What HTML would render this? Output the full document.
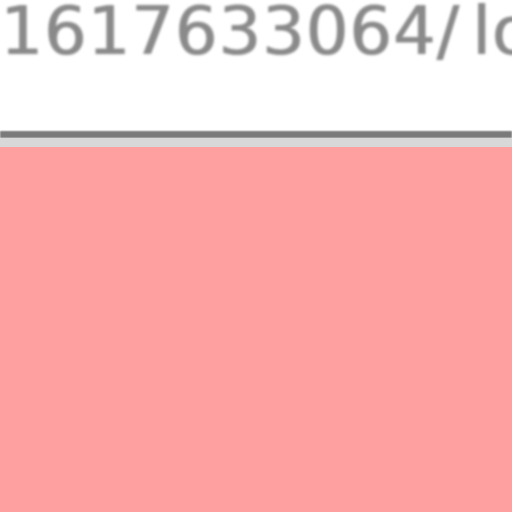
<!DOCTYPE html>
<html><head><style>
html,body{margin:0;padding:0;width:512px;height:512px;overflow:hidden;background:#fff;position:relative}
.t{position:absolute;left:0px;top:-2px;font-family:"DejaVu Sans",sans-serif;font-size:67px;line-height:67px;letter-spacing:1px;color:#8a8a8a;white-space:nowrap;filter:blur(1.3px);text-shadow:1px 0 0 #8a8a8a}
.l1{position:absolute;left:0;top:131px;width:512px;height:7px;background:#7a7a7a;filter:blur(0.8px)}
.l2{position:absolute;left:0;top:138px;width:512px;height:9px;background:#d8d8d8}
.p{position:absolute;left:0;top:147px;width:512px;height:365px;background:#ffa0a0}
</style></head><body>
<div class="t">1617633064/<span style="margin-left:12px">lo</span></div>
<div class="l1"></div><div class="l2"></div><div class="p"></div>
</body></html>
